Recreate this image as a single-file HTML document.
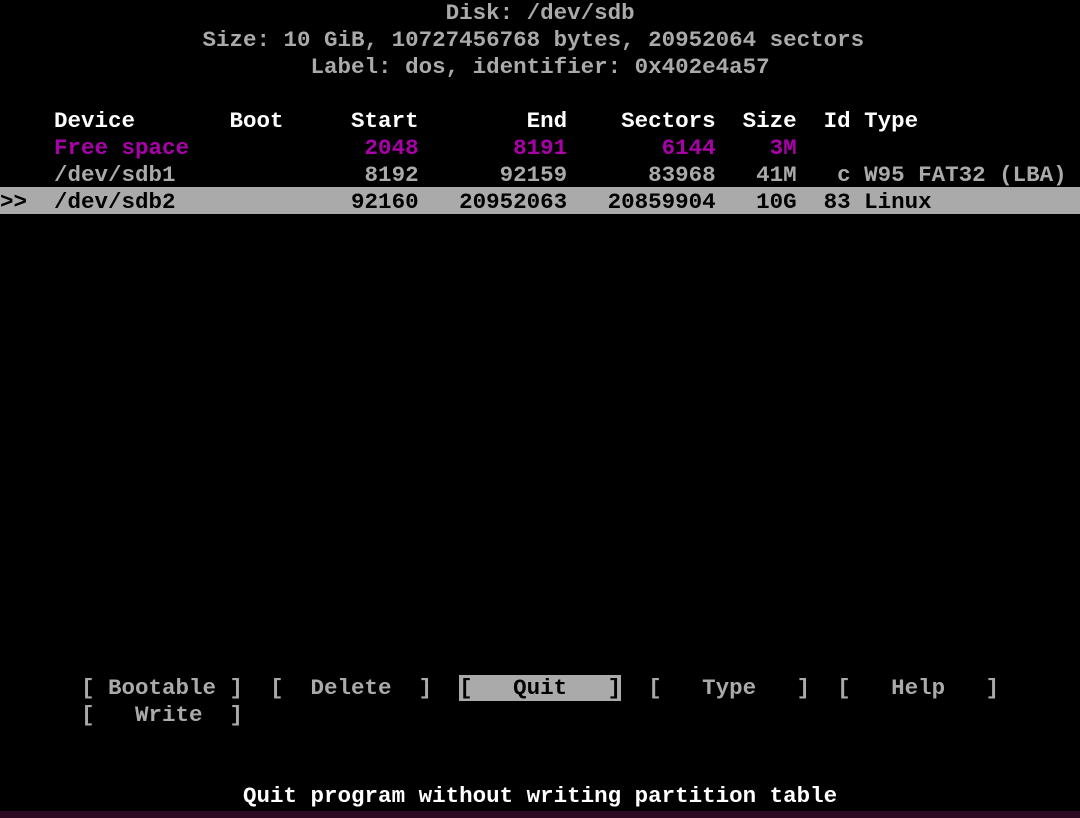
<!DOCTYPE html>
<html><head><style>
html,body{margin:0;padding:0;background:#000;width:1080px;height:818px;overflow:hidden}
.r{position:absolute;left:0;height:27px;line-height:27px;white-space:pre;font-family:"Liberation Mono",monospace;font-size:22.5px;color:#aaa;font-weight:bold;padding-top:2px;box-sizing:border-box}
.w{color:#fff}
.p{color:#aa00aa}
.hl{background:#aaa;color:#000;width:1080px;padding-top:2px}
.q{background:#aaa;color:#000}
.strip{position:absolute;left:0;top:811px;width:1080px;height:7px;background:#2c0a22}
</style></head><body>
<div class="r" style="top:-2px">                                 Disk: /dev/sdb</div>
<div class="r" style="top:25px">               Size: 10 GiB, 10727456768 bytes, 20952064 sectors</div>
<div class="r" style="top:52px">                       Label: dos, identifier: 0x402e4a57</div>
<div class="r w" style="top:106px">    Device       Boot     Start        End    Sectors  Size  Id Type</div>
<div class="r p" style="top:133px">    Free space             2048       8191       6144    3M</div>
<div class="r" style="top:160px">    /dev/sdb1              8192      92159      83968   41M   c W95 FAT32 (LBA)</div>
<div class="r hl" style="top:187px">&gt;&gt;  /dev/sdb2             92160   20952063   20859904   10G  83 Linux</div>
<div class="r" style="top:673px">      [ Bootable ]  [  Delete  ]  <span class="q">[   Quit   ]</span>  [   Type   ]  [   Help   ]</div>
<div class="r" style="top:700px">      [   Write  ]</div>
<div class="r w" style="top:781px">                  Quit program without writing partition table</div>
<div class="strip"></div>
</body></html>
